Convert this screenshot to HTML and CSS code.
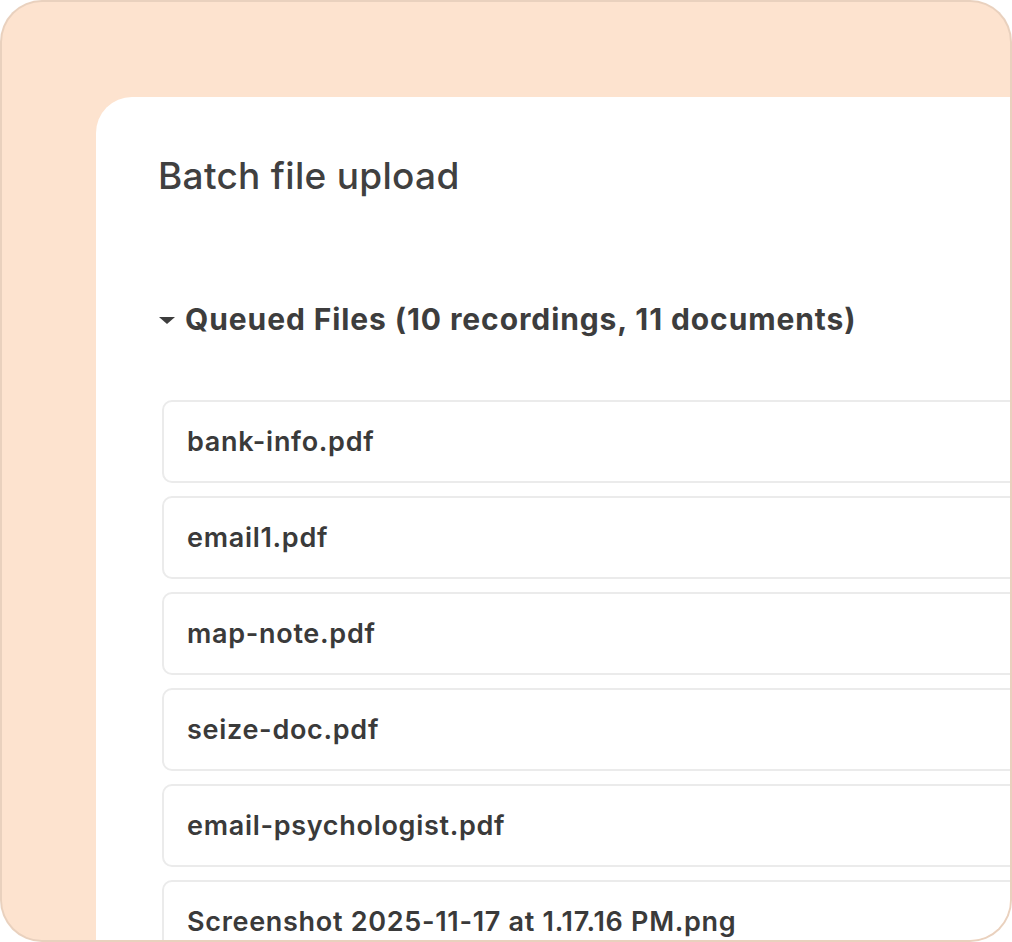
FILE: index.html
```html
<!DOCTYPE html>
<html lang="en">
<head>
    <meta charset="UTF-8">
    <meta name="viewport" content="width=device-width, initial-scale=1.0">
    <title>Batch file upload</title>
    <link rel="stylesheet" href="styles.css">
</head>
<body>
    <div class="frame">
        <div class="panel">
            <h1>Batch file upload</h1>
            <h2 class="queue-title"><span class="caret"></span>Queued Files (10 recordings, 11 documents)</h2>
            <ul class="file-list">
                <li>bank-info.pdf</li>
                <li>email1.pdf</li>
                <li>map-note.pdf</li>
                <li>seize-doc.pdf</li>
                <li>email-psychologist.pdf</li>
                <li>Screenshot 2025-11-17 at 1.17.16 PM.png</li>
            </ul>
        </div>
    </div>
</body>
</html>
```

FILE: styles.css
```css
* {
    margin: 0;
    padding: 0;
    box-sizing: border-box;
}

body {
    font-family: Inter, "Noto Sans", sans-serif;
    background: #fff;
    width: 1012px;
    height: 942px;
    overflow: hidden;
}

.frame {
    width: 1012px;
    height: 942px;
    border: 2px solid rgba(0, 0, 0, 0.08);
    border-radius: 42px;
    background: #fde3cf;
    overflow: hidden;
    padding: 95px 0 0 94px;
}

.panel {
    width: 1100px;
    height: 1000px;
    background: #fff;
    border-radius: 36px 0 0 0;
    padding: 57px 0 0 62px;
}

.panel h1 {
    font-size: 37px;
    line-height: 44px;
    font-weight: 500;
    letter-spacing: 0.3px;
    color: #404040;
}

.queue-title {
    margin-top: 103px;
    font-size: 30px;
    line-height: 36px;
    font-weight: 700;
    letter-spacing: 0.9px;
    color: #3d3d3d;
    display: flex;
    align-items: center;
}

.caret {
    width: 0;
    height: 0;
    border-left: 8.5px solid transparent;
    border-right: 8.5px solid transparent;
    border-top: 7px solid #3d3d3d;
    margin: 2px 10px 0 1px;
}

.file-list {
    list-style: none;
    margin: 63px 0 0 4px;
    display: flex;
    flex-direction: column;
    gap: 13px;
}

.file-list li {
    border: 2px solid #ebebeb;
    border-radius: 10px;
    padding: 24px 23px 23px;
    font-size: 27px;
    line-height: 32px;
    font-weight: 600;
    letter-spacing: 0.7px;
    color: #3a3a3a;
}
```
